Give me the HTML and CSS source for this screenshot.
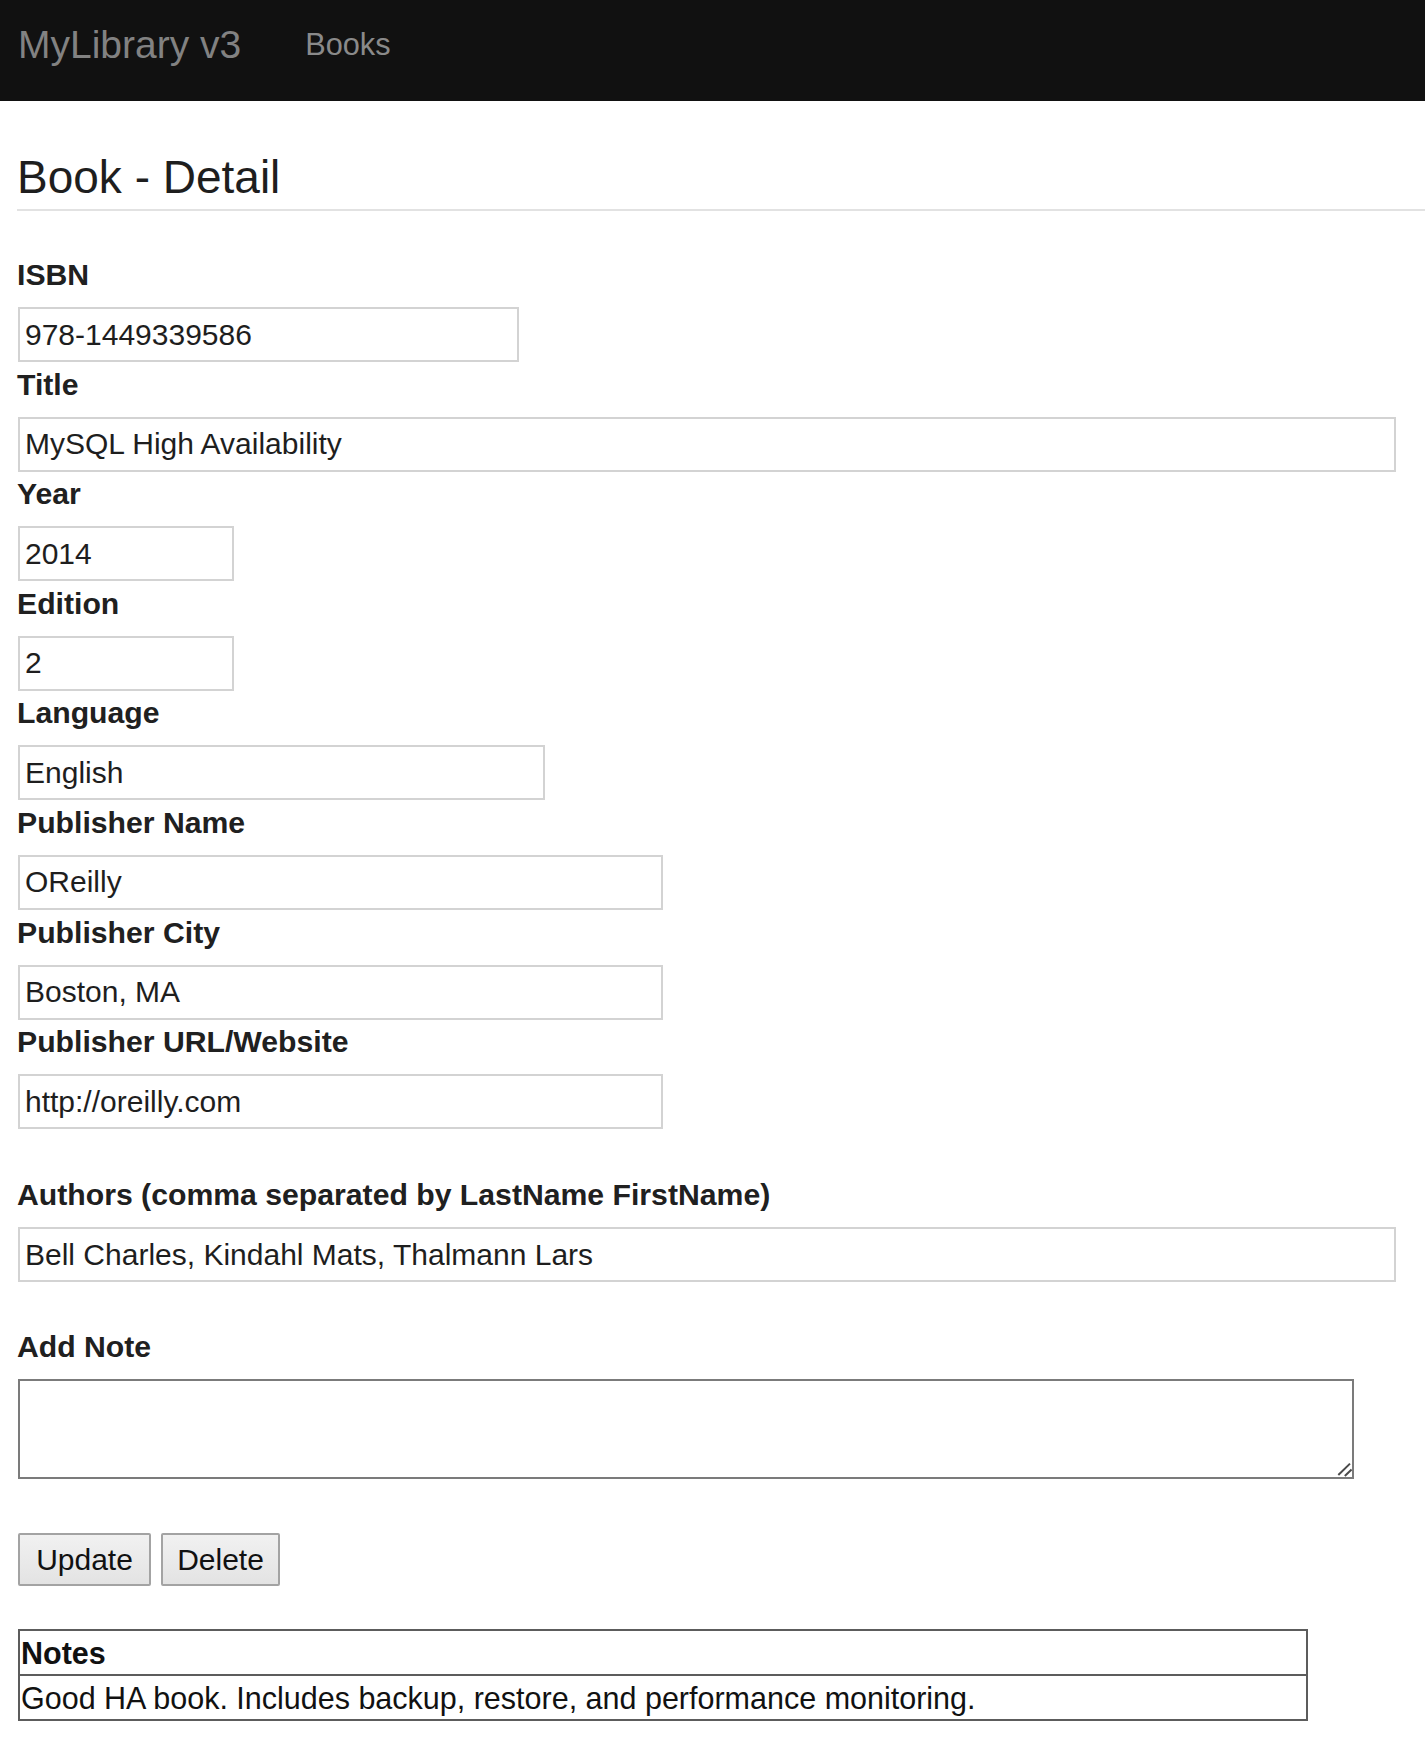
FILE: index.html
```html
<!DOCTYPE html>
<html lang="en">
<head>
<meta charset="utf-8">
<title>MyLibrary v3 - Book Detail</title>
<link rel="stylesheet" href="styles.css">
</head>
<body>
<nav class="navbar">
  <a class="brand" href="#">MyLibrary v3</a>
  <a class="nav-link" href="#">Books</a>
</nav>
<main class="page">
  <h1 class="page-title">Book - Detail</h1>
  <form class="book-form">
    <div class="field">
      <label class="field-label">ISBN</label>
      <input class="text-input w-isbn" type="text" value="978-1449339586">
    </div>
    <div class="field">
      <label class="field-label">Title</label>
      <input class="text-input w-full" type="text" value="MySQL High Availability">
    </div>
    <div class="field">
      <label class="field-label">Year</label>
      <input class="text-input w-small" type="text" value="2014">
    </div>
    <div class="field">
      <label class="field-label">Edition</label>
      <input class="text-input w-small" type="text" value="2">
    </div>
    <div class="field">
      <label class="field-label">Language</label>
      <input class="text-input w-lang" type="text" value="English">
    </div>
    <div class="field">
      <label class="field-label">Publisher Name</label>
      <input class="text-input w-pub" type="text" value="OReilly">
    </div>
    <div class="field">
      <label class="field-label">Publisher City</label>
      <input class="text-input w-pub" type="text" value="Boston, MA">
    </div>
    <div class="field">
      <label class="field-label">Publisher URL/Website</label>
      <input class="text-input w-pub" type="text" value="http://oreilly.com">
    </div>
    <div class="field field-authors">
      <label class="field-label">Authors (comma separated by LastName FirstName)</label>
      <input class="text-input w-full" type="text" value="Bell Charles, Kindahl Mats, Thalmann Lars">
    </div>
    <div class="field field-note">
      <label class="field-label">Add Note</label>
      <div class="note-wrap">
        <textarea class="note-input"></textarea>
        <svg class="grip" width="16" height="16" viewBox="0 0 16 16" aria-hidden="true">
          <line x1="2.3" y1="14" x2="14" y2="2.6" stroke="#4a4a4a" stroke-width="2"/>
          <line x1="8.8" y1="15" x2="15.6" y2="8.6" stroke="#4a4a4a" stroke-width="2"/>
        </svg>
      </div>
    </div>
    <div class="actions">
      <button type="button" class="btn btn-update">Update</button>
      <button type="button" class="btn btn-delete">Delete</button>
    </div>
  </form>
  <table class="notes">
    <thead>
      <tr><th>Notes</th></tr>
    </thead>
    <tbody>
      <tr><td>Good HA book. Includes backup, restore, and performance monitoring.</td></tr>
    </tbody>
  </table>
</main>
</body>
</html>
```
FILE: styles.css
```css
html, body {
  margin: 0;
  padding: 0;
  background: #ffffff;
}

body {
  font-family: "Liberation Sans", Arial, Helvetica, sans-serif;
  color: #222222;
}

.navbar {
  box-sizing: border-box;
  height: 101px;
  background: #111111;
  display: flex;
  align-items: flex-start;
  padding: 25px 0 0 18px;
}

.brand {
  font-size: 39px;
  line-height: 39px;
  color: #828282;
  text-decoration: none;
}

.nav-link {
  margin: 5px 0 0 64px;
  font-size: 30.7px;
  line-height: 30.7px;
  color: #8a8a8a;
  text-decoration: none;
}

.page {
  padding: 0 0 40px 17px;
}

.page-title {
  margin: 51px 0 47px 0;
  padding-bottom: 7px;
  font-size: 46px;
  line-height: 50px;
  font-weight: 400;
  color: #1e1e1e;
  border-bottom: 2px solid #e2e2e2;
}

.book-form {
  margin: 0;
}

.field {
  margin-bottom: 5.6px;
}

.field-authors {
  margin-top: 49px;
}

.field-note {
  margin-top: 48px;
}

.field-label {
  display: block;
  font-size: 30.2px;
  line-height: 33px;
  font-weight: 700;
  color: #202020;
  margin-bottom: 16px;
}

.text-input {
  display: block;
  box-sizing: border-box;
  height: 55px;
  margin: 0 0 0 1px;
  padding: 0 5px;
  border: 2px solid #d3d3d3;
  border-radius: 0;
  background: #ffffff;
  font-family: "Liberation Sans", Arial, Helvetica, sans-serif;
  font-size: 30px;
  color: #1e1e1e;
  outline: none;
}

.w-isbn { width: 501px; }
.w-full { width: 1378px; }
.w-small { width: 216px; }
.w-lang { width: 527px; }
.w-pub { width: 645px; }

.note-wrap {
  position: relative;
  width: 1336px;
  margin-left: 1px;
}

.note-input {
  display: block;
  box-sizing: border-box;
  width: 1336px;
  height: 100px;
  margin: 0;
  border: 2px solid #7b7b7b;
  border-radius: 0;
  resize: none;
  font-family: "Liberation Sans", Arial, Helvetica, sans-serif;
  font-size: 30px;
  outline: none;
}

.grip {
  position: absolute;
  right: 2px;
  bottom: 2px;
}

.actions {
  display: flex;
  gap: 10px;
  margin-top: 54px;
  margin-left: 1px;
}

.btn {
  box-sizing: border-box;
  height: 53px;
  padding: 0;
  border: 2px solid #a3a3a3;
  border-radius: 2px;
  background: linear-gradient(#f1f1f1, #e3e3e3);
  font-family: "Liberation Sans", Arial, Helvetica, sans-serif;
  font-size: 30px;
  color: #111111;
  text-align: center;
}

.btn-update { width: 133px; }
.btn-delete { width: 119px; }

.notes {
  margin-top: 43px;
  margin-left: 1px;
  width: 1290px;
  border-collapse: collapse;
  border: 2px solid #5c5c5c;
}

.notes th,
.notes td {
  border: 2px solid #5c5c5c;
  padding: 4.5px 3px 4.5px 1px;
  font-size: 30.5px;
  line-height: 34px;
  text-align: left;
  color: #111111;
}

.notes th {
  font-weight: 700;
}

.notes td {
  font-weight: 400;
}
```
